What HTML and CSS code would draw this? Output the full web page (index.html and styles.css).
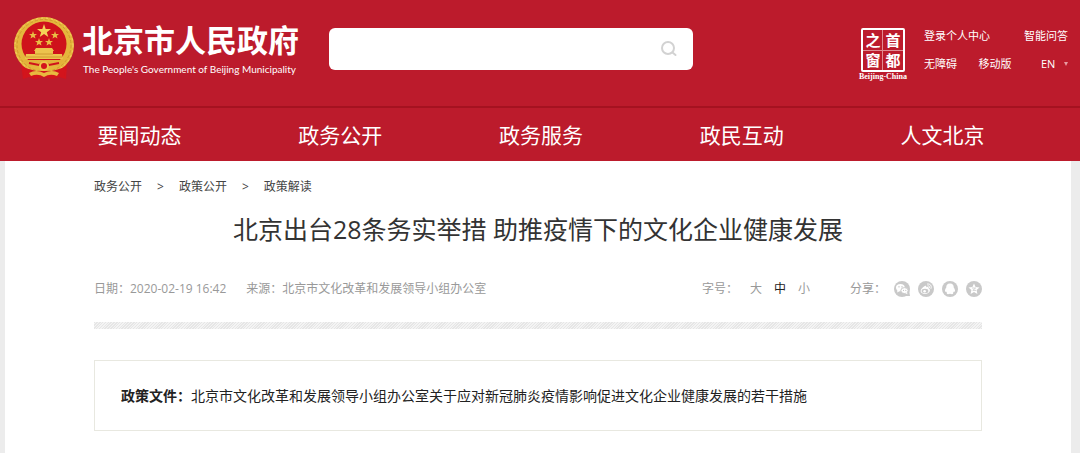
FILE: index.html
```
<!DOCTYPE html>
<html lang="zh-CN">
<head>
    <meta charset="UTF-8">
    <meta name="viewport" content="width=device-width, initial-scale=1.0">
    <title>北京出台28条务实举措 助推疫情下的文化企业健康发展</title>
    <link rel="stylesheet" href="styles.css">
</head>
<body>
<header class="header">
    <div class="header-top">
        <a class="brand" href="#">
            <svg class="emblem" viewBox="0 0 60 64" aria-hidden="true">
                <path d="M14 51 L46 51 L53 48 L52 63 L45 61 L39 63 L30 61 L20 63 L15 61 L9 63 L7 48Z" fill="#d3141c"/>
                <ellipse cx="30" cy="29.500" rx="30" ry="28.500" fill="#e5b63c"/>
                <ellipse cx="30" cy="29.500" rx="27" ry="26" fill="none" stroke="#cf9a2e" stroke-width="1" stroke-dasharray="3 2"/>
                <ellipse cx="30" cy="29.500" rx="29" ry="27.500" fill="none" stroke="#f5d768" stroke-width="1" stroke-dasharray="2 3"/>
                <circle cx="30" cy="28" r="22.500" fill="#cf121b"/>
                <path d="M30 8 L31.7 13 L37 13 L32.8 16.200 L34.3 21 L30 18 L25.7 21 L27.200 16.200 L23 13 L28.3 13Z" fill="#f4d357"/>
                <g fill="#e9bd45">
                    <path id="star" d="M19 15 L20 18 L23 18.100 L20.700 19.800 L21.500 22.600 L19 21 L16.500 22.600 L17.300 19.800 L15 18.100 L18 18Z"/>
                    <use href="#star" x="22"/>
                    <use href="#star" x="6" y="7"/>
                    <use href="#star" x="16" y="7"/>
                </g>
                <path d="M22 32 L38 32 L40 35 L39 35 L39 38 L48 38 L49 43 L11 43 L12 38 L21 38 L21 35 L20 35Z" fill="#edc34d"/>
                <path d="M10 44 L50 44 L45 50 L15 50Z" fill="#e3b13a"/>
                <path d="M21 38h18M12 41h36" stroke="#d09a30" stroke-width="1"/>
                <path d="M15 47 L25 49 L30 46 L35 49 L45 47" fill="none" stroke="#cf121b" stroke-width="2"/>
                <path d="M8 51 L22 55 L38 55 L52 51 L50 60 L10 60Z" fill="#d3141c"/>
                <circle cx="30" cy="50" r="4" fill="#d3141c" stroke="#efc54b" stroke-width="2"/>
                <path d="M15 57 Q22 53 30 57 Q38 53 45 57 L43 60 Q36 57 30 61 Q24 57 17 60Z" fill="#e8b93f"/>
            </svg>
            <span class="brand-text">
                <span class="brand-name">北京市人民政府</span>
                <span class="brand-sub">The People's Government of Beijing Municipality</span>
            </span>
        </a>
        <form class="search">
            <input type="text" name="q" aria-label="搜索">
            <button type="submit" aria-label="搜索">
                <svg viewBox="0 0 16 16" fill="none" stroke="#d2d2d2" stroke-width="2" stroke-linecap="round">
                    <circle cx="7" cy="7" r="6"/>
                    <path d="M11.5 11.5 L14.5 14"/>
                </svg>
            </button>
        </form>
        <div class="header-right">
            <a class="capital" href="#">
                <span class="seal">
                    <span>之</span><span>首</span>
                    <span>窗</span><span>都</span>
                </span>
                <span class="capital-name">Beijing-China</span>
            </a>
            <div class="tools">
                <div class="tools-row">
                    <a href="#">登录个人中心</a>
                    <a href="#">智能问答</a>
                </div>
                <div class="tools-row">
                    <a href="#">无障碍</a>
                    <a href="#">移动版</a>
                    <label class="lang">
                        <select aria-label="Language">
                            <option>EN</option>
                        </select>
                        <span class="caret"></span>
                    </label>
                </div>
            </div>
        </div>
    </div>
    <nav class="nav">
        <a href="#">要闻动态</a>
        <a href="#">政务公开</a>
        <a href="#">政务服务</a>
        <a href="#">政民互动</a>
        <a href="#">人文北京</a>
    </nav>
</header>
<main class="page">
    <article class="article">
        <div class="crumbs">
            <a href="#">政务公开</a>
            <span>&gt;</span>
            <a href="#">政策公开</a>
            <span>&gt;</span>
            <a href="#">政策解读</a>
        </div>
        <h1>北京出台28条务实举措 助推疫情下的文化企业健康发展</h1>
        <div class="meta">
            <div class="meta-info">
                <span>日期：2020-02-19 16:42</span>
                <span>来源：北京市文化改革和发展领导小组办公室</span>
            </div>
            <div class="font-size">
                <span>字号：</span>
                <div class="sizes">
                    <button type="button">大</button>
                    <button type="button" class="active">中</button>
                    <button type="button">小</button>
                </div>
            </div>
            <div class="share">
                <span>分享：</span>
                <div class="share-icons">
                    <a href="#" aria-label="微信">
                        <svg viewBox="0 0 16 16">
                            <circle cx="8" cy="8" r="8" fill="#c9c9c9"/>
                            <path d="M10 15 L16 15 L15 9Z" fill="#c9c9c9"/>
                            <ellipse cx="6.4" cy="6.6" rx="4.4" ry="3.6" fill="#fff"/>
                            <path d="M3.5 8.5 L3.2 11.5 L6 10Z" fill="#fff"/>
                            <ellipse cx="10.5" cy="9.6" rx="3.7" ry="3" fill="#fff" stroke="#c9c9c9"/>
                            <path d="M11 12 L13.4 13.3 L13 11Z" fill="#fff"/>
                            <circle cx="5" cy="5.8" r=".6" fill="#aaa"/>
                            <circle cx="8" cy="5.8" r=".6" fill="#aaa"/>
                            <circle cx="9.5" cy="9.2" r=".5" fill="#aaa"/>
                            <circle cx="11.8" cy="9.2" r=".5" fill="#aaa"/>
                        </svg>
                    </a>
                    <a href="#" aria-label="微博">
                        <svg viewBox="0 0 16 16">
                            <circle cx="8" cy="8" r="8" fill="#c9c9c9"/>
                            <path d="M6.8 5 C8 4.4 8.6 5.2 8.3 6.3 C10 5.8 11 6.3 10.7 7.6 C13.4 8.8 11.4 13 7 13 C2.4 13 1.8 9.8 3.8 7.6 C4.8 6.3 5.8 5.4 6.8 5Z" fill="#fff"/>
                            <ellipse cx="7" cy="10" rx="3.4" ry="2.2" fill="#c9c9c9"/>
                            <circle cx="6.6" cy="10.2" r="1.3" fill="#fff"/>
                            <path d="M9.5 3 C12.3 2.6 14 4.7 13 7.4M9.8 4.9 C11.3 4.7 12 5.8 11.5 6.8" fill="none" stroke="#fff" stroke-linecap="round"/>
                        </svg>
                    </a>
                    <a href="#" aria-label="QQ">
                        <svg viewBox="0 0 16 16">
                            <circle cx="8" cy="8" r="8" fill="#c9c9c9"/>
                            <path d="M8 2.4 C10.8 2.4 11.9 4.3 11.7 6.6 C12.7 8 13.4 9.5 12.9 10.8 L11.9 10.5 L11 12 C11.6 12.6 11 13.2 10 13.2 L8 12.8 L6 13.2 C5 13.2 4.4 12.6 5 12 L4.100 10.5 L3.100 10.8 C2.6 9.5 3.3 8 4.3 6.6 C4.100 4.3 5.2 2.4 8 2.4Z" fill="#fff"/>
                        </svg>
                    </a>
                    <a href="#" aria-label="QQ空间">
                        <svg viewBox="0 0 16 16">
                            <circle cx="8" cy="8" r="8" fill="#c9c9c9"/>
                            <path d="M8 2.4 L9.6 6 L13.5 6.4 L10.6 9 L11.4 12.9 L8 10.9 L4.6 12.9 L5.4 9 L2.5 6.4 L6.4 6Z" fill="#fff"/>
                            <path d="M6 7 L9.6 7 L6.8 9.4 L10 9.4" fill="none" stroke="#c9c9c9" stroke-width=".8"/>
                        </svg>
                    </a>
                </div>
            </div>
        </div>
        <div class="stripe"></div>
        <div class="policy">
            <strong>政策文件：</strong><a href="#">北京市文化改革和发展领导小组办公室关于应对新冠肺炎疫情影响促进文化企业健康发展的若干措施</a>
        </div>
    </article>
</main>
</body>
</html>
```
FILE: styles.css
```
* {
    box-sizing: border-box;
}
body {
    margin: 0;
    min-height: 100vh;
    display: flex;
    flex-direction: column;
    font-family: "Open Sans", "Noto Sans CJK SC", sans-serif;
    font-size: 12px;
    color: #333;
    background-color: #ececec;
}
a {
    color: inherit;
    text-decoration: none;
}
button, input, select {
    font: inherit;
    color: inherit;
    padding: 0;
    border: none;
    background: none;
}
button {
    cursor: pointer;
}
svg {
    display: block;
}

/* header */
.header {
    background-color: #bc1b2c;
    color: #fff;
}
.header-top {
    display: flex;
    align-items: flex-start;
    height: 108px;
    padding: 16px 12px 0 14px;
    border-bottom: 2px solid #a51220;
}
.brand {
    display: flex;
    gap: 8px;
}
.emblem {
    width: 60px;
    height: 64px;
}
.brand-text {
    display: flex;
    flex-direction: column;
    padding-top: 5px;
    white-space: nowrap;
}
.brand-name {
    font-size: 31px;
    font-weight: bold;
    line-height: 38px;
}
.brand-sub {
    padding-left: 1px;
    font-family: Lato, sans-serif;
    font-size: 10px;
    line-height: 20px;
}
.search {
    display: flex;
    flex: 0 1 364px;
    height: 42px;
    margin: 12px 0 0 30px;
    padding-right: 16px;
    border-radius: 6px;
    background: #fff;
}
.search input {
    flex: 1;
    min-width: 0;
    padding-left: 14px;
    color: #333;
    outline: none;
}
.search svg {
    width: 16px;
    height: 16px;
}
.header-right {
    display: flex;
    gap: 17px;
    margin-left: auto;
    padding-top: 12px;
}
.capital {
    display: flex;
    flex-direction: column;
    align-items: center;
    gap: 1px;
}
.seal {
    display: grid;
    grid-template-columns: 1fr 1fr;
    gap: 2px;
    width: 44px;
    height: 44px;
    padding: 1px;
    border: 2px solid #fff;
    border-radius: 2px;
    background: linear-gradient(#e08a92, #e08a92) center / 1px 100% no-repeat, linear-gradient(#e08a92, #e08a92) center / 100% 1px no-repeat;
}
.seal span {
    font-size: 15px;
    font-weight: bold;
    line-height: 18px;
    text-align: center;
}
.capital-name {
    font-family: "Liberation Serif", serif;
    font-size: 8px;
    font-weight: bold;
    line-height: 8px;
}
.tools {
    width: 144px;
    font-size: 11px;
    line-height: 16px;
}
.tools-row {
    display: flex;
    justify-content: space-between;
    margin-bottom: 12px;
}
.lang {
    display: flex;
    align-items: center;
    gap: 8px;
    padding-left: 8px;
}
.lang select {
    appearance: none;
}
.lang option {
    color: #333;
}
.caret {
    border: 2px solid transparent;
    border-top: 4px solid #e79aa1;
    border-bottom: none;
}
.nav {
    display: grid;
    grid-template-columns: repeat(5, 1fr);
    padding: 1px 37px 0 39px;
    font-size: 21px;
    line-height: 52px;
    text-align: center;
}

/* article */
.page {
    flex: 1;
    margin: 0 9px 0 5px;
    background: #fff;
}
.article {
    max-width: 888px;
    margin: 0 auto;
    padding-bottom: 22px;
}
.crumbs {
    display: flex;
    gap: 15px;
    padding-top: 17px;
    line-height: 18px;
    color: #444;
}
h1 {
    margin: 14px 0 0;
    font-size: 25px;
    font-weight: normal;
    line-height: 38px;
    text-align: center;
}
.meta {
    display: flex;
    align-items: center;
    margin-top: 32px;
    line-height: 18px;
    color: #999;
}
.meta-info {
    display: flex;
    gap: 20px;
    margin-right: auto;
}
.font-size, .share, .sizes, .share-icons {
    display: flex;
    align-items: center;
    gap: 12px;
}
.font-size {
    margin-right: 40px;
}
.sizes button.active {
    color: #222;
}
.share-icons {
    gap: 8px;
}
.share {
    gap: 8px;
}
.share-icons svg {
    width: 16px;
    height: 16px;
}
.stripe {
    height: 7px;
    margin-top: 24px;
    background: repeating-linear-gradient(135deg, #e6e6e6 0 1px, #f4f4f4 1px 2px);
}
.policy {
    margin-top: 31px;
    padding: 24px 26px;
    border: 1px solid #e8e8e0;
    font-size: 14px;
    line-height: 21px;
    color: #222;
}
```
